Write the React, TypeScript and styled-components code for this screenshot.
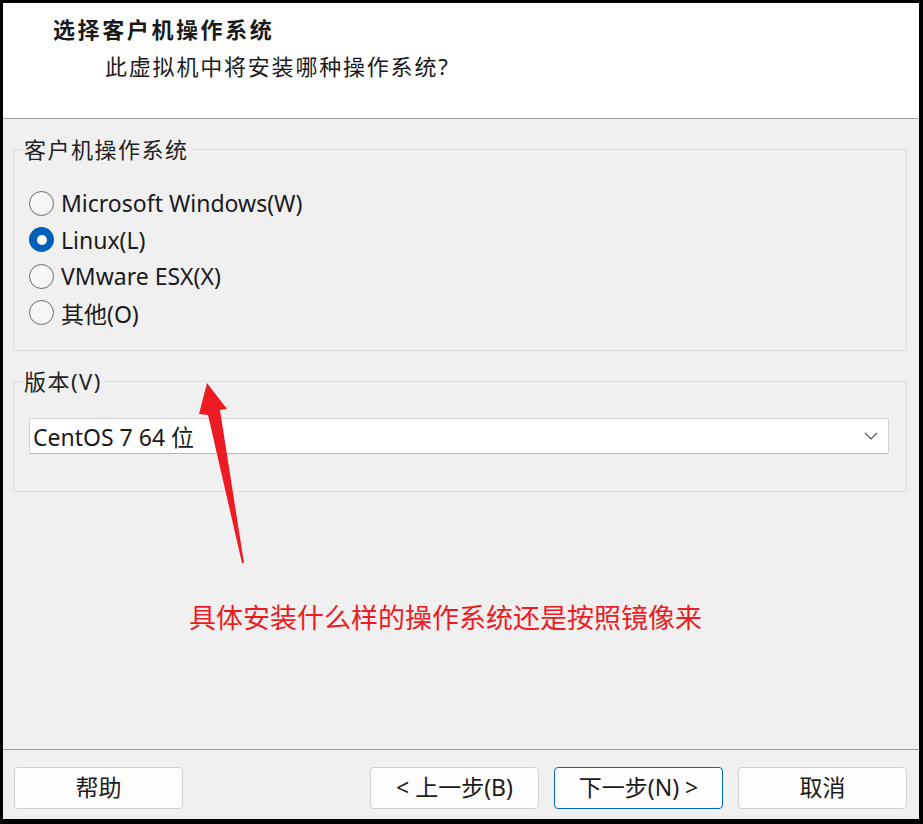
import styled, { createGlobalStyle } from "styled-components";

const GlobalStyle = createGlobalStyle`
  html, body {
    margin: 0;
    padding: 0;
    background: #000;
  }
  * {
    box-sizing: border-box;
  }
`;

const font = `"Noto Sans", "Noto Sans CJK SC", sans-serif`;

const Frame = styled.div`
  width: 923px;
  height: 824px;
  background: #000;
  padding: 3px 4px 5px 3px;
`;

const Dialog = styled.div`
  display: flex;
  flex-direction: column;
  height: 100%;
  background: #f0f0f0;
  font-family: ${font};
  color: #1a1a1a;
`;

const Header = styled.div`
  height: 116px;
  background: #fff;
  border-bottom: 1px solid #a0a0a0;
  padding: 11px 0 0 50px;
`;

const Title = styled.div`
  font-size: 22px;
  font-weight: 700;
  line-height: 30px;
  letter-spacing: 2.6px;
`;

const Subtitle = styled.div`
  margin: 7px 0 0 52px;
  font-size: 22px;
  line-height: 30px;
  letter-spacing: 1.8px;
`;

const Body = styled.div`
  position: relative;
  flex: 1;
  display: flex;
  flex-direction: column;
  padding: 17px 12px 0 10px;
`;

const Group = styled.fieldset<{ $gap?: number }>`
  margin: ${(p) => p.$gap ?? 0}px 0 0 0;
  padding: 0;
  border: 1px solid #dcdcdc;
  min-width: 0;
`;

const Caption = styled.legend`
  margin-left: 8px;
  padding: 0 2px;
  font-size: 22px;
  line-height: 26px;
  letter-spacing: 1.5px;
  color: #222;
`;

const RadioList = styled.div`
  display: flex;
  flex-direction: column;
  padding: 23px 0 19px 15px;
`;

const RadioRow = styled.label`
  display: flex;
  align-items: center;
  gap: 7px;
  height: 36.5px;
  font-size: 23px;
`;

const Circle = styled.span<{ $checked?: boolean }>`
  width: 25px;
  height: 25px;
  border-radius: 50%;
  flex: none;
  display: flex;
  align-items: center;
  justify-content: center;
  border: ${(p) => (p.$checked ? "none" : "1.5px solid #6a6a6a")};
  background: ${(p) => (p.$checked ? "#005fb8" : "#f6f6f6")};

  &::after {
    content: "";
    display: ${(p) => (p.$checked ? "block" : "none")};
    width: 10px;
    height: 10px;
    border-radius: 50%;
    background: #fff;
  }
`;

const SelectArea = styled.div`
  padding: 24px 17px 37px 15px;
`;

const Combo = styled.div`
  height: 36px;
  display: flex;
  align-items: center;
  justify-content: space-between;
  padding: 0 10px 0 3px;
  background: #fff;
  border: 1px solid #d4d4d4;
  border-bottom-color: #b8b8b8;
  border-radius: 2px;
  font-size: 23px;
`;

const Note = styled.div`
  margin: 108px 0 0 176px;
  font-size: 27px;
  line-height: 36px;
  color: #ed1c24;
`;

const Overlay = styled.svg`
  position: absolute;
  left: 0;
  top: 0;
  pointer-events: none;
`;

const Footer = styled.div`
  display: flex;
  align-items: center;
  gap: 15px;
  border-top: 1px solid #a0a0a0;
  padding: 17px 12px 10px 11px;
`;

const Spacer = styled.div`
  flex: 1;
`;

const Button = styled.button<{ $primary?: boolean }>`
  width: 169px;
  height: 42px;
  background: #fdfdfd;
  border: 1px solid ${(p) => (p.$primary ? "#0067c0" : "#d0d0d0")};
  border-radius: 4px;
  font-family: ${font};
  font-size: 23px;
  line-height: 38px;
  color: #1a1a1a;
  padding: 0 0 2px;
`;

const systems = [
  { label: "Microsoft Windows(W)", checked: false },
  { label: "Linux(L)", checked: true },
  { label: "VMware ESX(X)", checked: false },
  { label: "其他(O)", checked: false },
];

export default function App() {
  return (
    <>
      <GlobalStyle />
      <Frame>
        <Dialog>
          <Header>
            <Title>选择客户机操作系统</Title>
            <Subtitle>此虚拟机中将安装哪种操作系统?</Subtitle>
          </Header>
          <Body>
            <Group>
              <Caption>客户机操作系统</Caption>
              <RadioList>
                {systems.map((s) => (
                  <RadioRow key={s.label}>
                    <Circle $checked={s.checked} />
                    {s.label}
                  </RadioRow>
                ))}
              </RadioList>
            </Group>
            <Group $gap={17}>
              <Caption>版本(V)</Caption>
              <SelectArea>
                <Combo>
                  <span>CentOS 7 64 位</span>
                  <svg width="14" height="8" viewBox="0 0 14 8">
                    <path d="M1 1 L7 7 L13 1" fill="none" stroke="#555" strokeWidth="1.2" />
                  </svg>
                </Combo>
              </SelectArea>
            </Group>
            <Note>具体安装什么样的操作系统还是按照镜像来</Note>
            <Overlay width="916" height="630" viewBox="3 119 916 630">
              <polygon
                points="207,383 227,409 220,410 244,563 242,563 208,415 199,414"
                fill="#ed1c24"
              />
            </Overlay>
          </Body>
          <Footer>
            <Button>帮助</Button>
            <Spacer />
            <Button>&lt; 上一步(B)</Button>
            <Button $primary>下一步(N) &gt;</Button>
            <Button>取消</Button>
          </Footer>
        </Dialog>
      </Frame>
    </>
  );
}
